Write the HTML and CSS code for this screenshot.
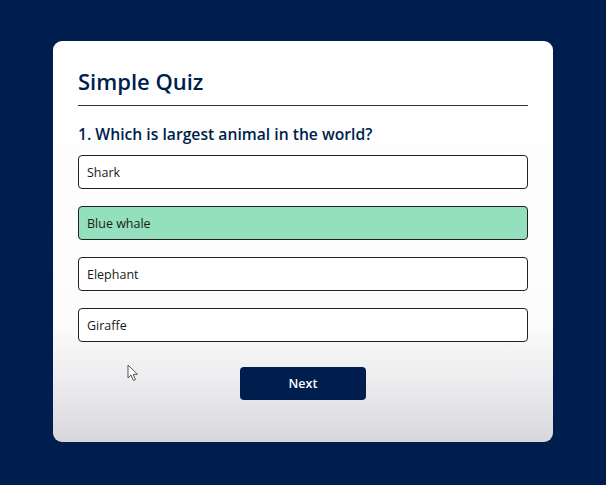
FILE: index.html
```html
<!DOCTYPE html>
<html>
<head>
<meta charset="utf-8">
<link rel="stylesheet" href="styles.css">
</head>
<body>
<div class="app">
  <h1 class="title">Simple Quiz</h1>
  <div class="quiz">
    <h2 class="question">1. Which is largest animal in the world?</h2>
    <div class="answers">
      <button class="btn">Shark</button>
      <button class="btn correct">Blue whale</button>
      <button class="btn">Elephant</button>
      <button class="btn">Giraffe</button>
    </div>
    <button class="next">Next</button>
  </div>
</div>
<svg class="cursor" width="12" height="18" viewBox="0 0 12 18"><path d="M1 1 L1 14 L4 11 L6.5 16.5 L8.5 15.6 L6.2 10.3 L10.5 10.3 Z" fill="#fff" stroke="#555" stroke-width="1"/></svg>
</body>
</html>
```
FILE: styles.css
```css
* { box-sizing: border-box; }
body {
  margin: 0;
  background: #001e4d;
  font-family: "Open Sans", "Noto Sans", sans-serif;
  height: 485px;
  overflow: hidden;
  position: relative;
}
.app {
  width: 500px;
  height: 401px;
  margin: 41px auto 0;
  border-radius: 9px;
  padding: 24px 25px 0;
  background: linear-gradient(180deg, #ffffff 0%, #fcfcfc 70%, #ececee 85%, #d8d8dc 100%);
}
.title {
  margin: 0;
  font-size: 22px;
  line-height: 32px;
  font-weight: 600;
  color: #001e4d;
  padding-bottom: 8px;
  border-bottom: 1px solid #333;
}
.question {
  margin: 16px 0 9px;
  font-size: 15.7px;
  line-height: 24px;
  font-weight: 600;
  color: #001e4d;
}
.answers {
  display: flex;
  flex-direction: column;
  gap: 17px;
}
.btn {
  display: block;
  width: 100%;
  height: 34px;
  text-align: left;
  padding: 0 8px;
  font-family: inherit;
  font-size: 12.5px;
  font-weight: 500;
  color: #1a1a1a;
  background: #fff;
  border: 1px solid #222;
  border-radius: 4px;
}
.btn.correct { background: #94dfbc; }
.next {
  display: block;
  width: 126px;
  height: 33px;
  margin: 25px auto 0;
  background: #001e4d;
  color: #fff;
  border: 0;
  border-radius: 4px;
  font-family: inherit;
  font-size: 12.5px;
  font-weight: 600;
}
.cursor {
  position: absolute;
  left: 127px;
  top: 364px;
}
```
